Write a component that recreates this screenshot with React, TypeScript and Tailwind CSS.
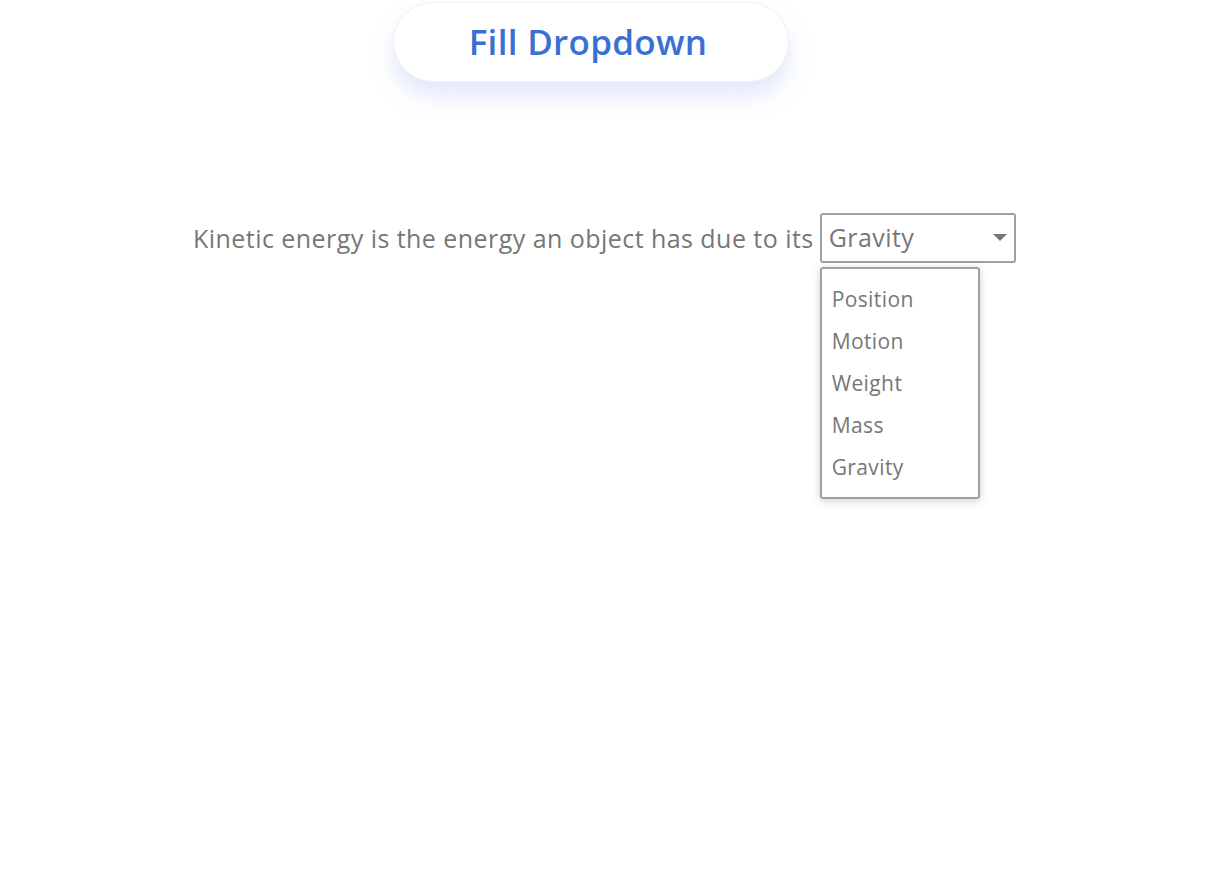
const options = ['Position', 'Motion', 'Weight', 'Mass', 'Gravity'];

export default function App() {
  return (
    <div
      className="w-[1216px] h-[876px] bg-white relative"
      style={{ fontFamily: '"Open Sans", sans-serif' }}
    >
      <div className="flex pt-[2px] pl-[393px]">
        <div className="w-[396px] h-[80px] rounded-full bg-white border border-[#eef0f6] shadow-[0_14px_20px_rgba(200,212,245,0.5)] flex items-center justify-center pr-[6px]">
          <span className="text-[35px] font-semibold text-[#3a6fd3] tracking-[0.3px]">Fill Dropdown</span>
        </div>
      </div>

      <div className="flex items-start pl-[193px] pt-[131px]">
        <span className="text-[25px] text-[#777777] tracking-[0.45px] leading-[50px] mr-[6px] whitespace-nowrap">
          Kinetic energy is the energy an object has due to its
        </span>
        <div className="relative shrink-0">
          <div className="w-[196px] h-[50px] border-2 border-[#a0a0a0] rounded-[3px] flex items-center justify-between pl-[7px] pr-[7px]">
            <span className="text-[25px] text-[#777777] tracking-[0.45px]">Gravity</span>
            <svg width="14" height="8" viewBox="0 0 14 8">
              <path d="M0 0 H14 L7 7 Z" fill="#777777" />
            </svg>
          </div>
          <div className="absolute left-0 top-[54px] w-[160px] h-[232px] bg-white border-2 border-[#a0a0a0] rounded-[3px] shadow-[0_2px_10px_rgba(0,0,0,0.18)] pt-[16px] pl-[10px]">
            {options.map((o) => (
              <div key={o} className="h-[42px] text-[21px] text-[#777777] tracking-[0.4px] leading-[28px]">
                {o}
              </div>
            ))}
          </div>
        </div>
      </div>
    </div>
  );
}
